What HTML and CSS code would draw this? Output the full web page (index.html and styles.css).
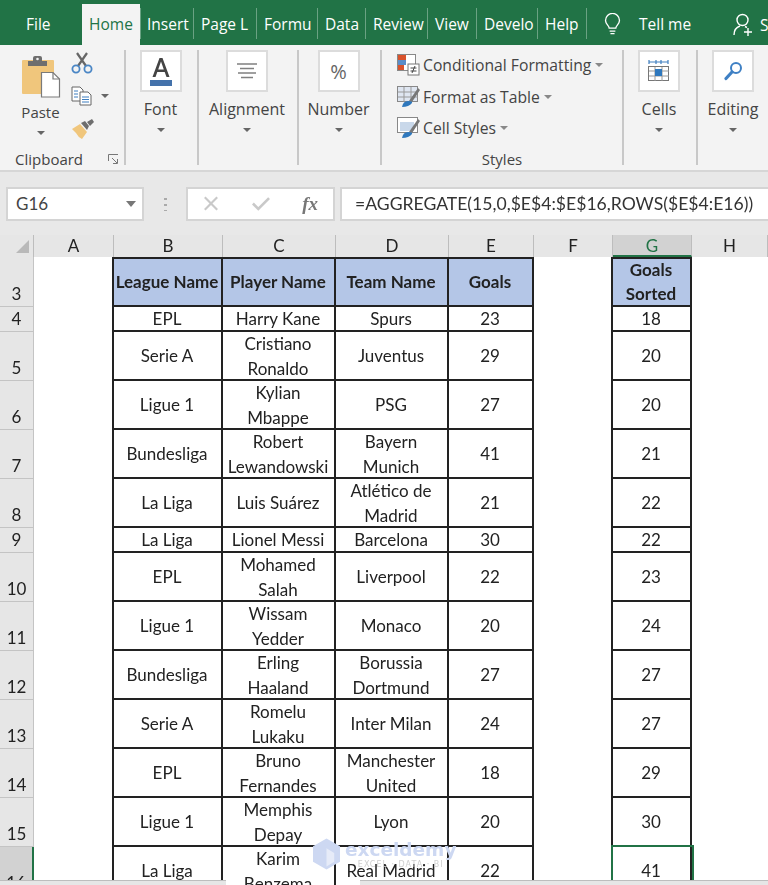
FILE: index.html
```html
<!DOCTYPE html>
<html lang="en">
<head>
    <meta charset="UTF-8">
    <title>AGGREGATE - Excel</title>
    <link rel="stylesheet" href="styles.css">
</head>
<body>
    <!-- ribbon tabs -->
    <nav class="tabs">
        <span class="tab tab-file">File</span>
        <span class="tab tab-active">Home</span>
        <span class="tab">Insert</span>
        <span class="tab">Page L</span>
        <span class="tab">Formu</span>
        <span class="tab">Data</span>
        <span class="tab">Review</span>
        <span class="tab">View</span>
        <span class="tab">Develo</span>
        <span class="tab">Help</span>
        <div class="tell-me">
            <svg width="17" height="23" viewBox="0 0 20 28" fill="none" stroke="#fff" stroke-width="1.600">
                <path d="M6 18.500c0-3-4.500-5-4.500-9.500a8.500 8.500 0 0 1 17 0c0 4.500-4.500 6.500-4.500 9.500z"/>
                <path d="M6.500 22h7M7.500 25h5"/>
            </svg>
            <span>Tell me</span>
        </div>
        <div class="share">
            <svg width="21" height="24" viewBox="0 0 21 24" fill="none" stroke="#fff" stroke-width="1.400">
                <circle cx="9.500" cy="7" r="5.500"/>
                <path d="M1 22c0-5 3-8 6-9M12 13.500l2 1M15 15v8M11 19h8"/>
            </svg>
            <span>S</span>
        </div>
    </nav>

    <!-- ribbon -->
    <section class="ribbon">
        <div class="group group-clipboard">
            <div class="clipboard-tools">
                <div class="paste">
                    <svg width="40" height="43" viewBox="0 0 40 43">
                        <rect x="1" y="5" width="32" height="34" rx="1" fill="#f0c67c"/>
                        <path d="M7 11V6h5V3q0-2 2-2h5q2 0 2 2v3h5v5z" fill="#6e6e6e"/>
                        <circle cx="16.500" cy="4" r="1.300" fill="#f3f3f3"/>
                        <path d="M20.500 17.500H32l6.500 6.500v18h-18z" fill="#fff" stroke="#7a7a7a" stroke-width="1.200"/>
                        <path d="M32 17.500V24h6.500" fill="none" stroke="#7a7a7a" stroke-width="1.200"/>
                    </svg>
                    <span class="tool-label">Paste</span>
                    <i class="caret"></i>
                </div>
                <div class="small-tools">
                    <svg width="22" height="22" viewBox="0 0 22 22" fill="none">
                        <path d="M6 1l9 13M16 1L7 14" stroke="#666" stroke-width="2.200"/>
                        <circle cx="5" cy="17" r="3.600" stroke="#4a86c5" stroke-width="1.800"/>
                        <circle cx="17" cy="17" r="3.600" stroke="#4a86c5" stroke-width="1.800"/>
                    </svg>
                    <div class="copy-row">
                        <svg width="22" height="20" viewBox="0 0 22 20" fill="#fff" stroke="#666" stroke-width="1">
                            <path d="M1 1h8l3 3v11H1z"/>
                            <path d="M9 6h8l3 3v10H9z"/>
                            <path d="M3 5h4M3 8h4M3 11h4M11 11h7M11 13.500h7M11 16h7" stroke="#3f7fc0"/>
                        </svg>
                        <i class="caret"></i>
                    </div>
                    <svg width="24" height="22" viewBox="0 0 24 22">
                        <path d="M1 11l8-5 7 8-5 7q-4-2-6-6z" fill="#f0c67c"/>
                        <path d="M10 5l4-2 4 5-2 4zM16 4l5-3 2 3-4 4z" fill="#6e6e6e"/>
                    </svg>
                </div>
            </div>
            <div class="group-label">
                <span>Clipboard</span>
                <svg class="launcher" width="11" height="10" viewBox="0 0 11 10" fill="none" stroke="#777">
                    <path d="M.5 7V.5H10M4 4l5 5M5 9.500h4.500V5"/>
                </svg>
            </div>
        </div>

        <div class="group group-collapsed">
            <div class="big-box">
                <svg width="24" height="31" viewBox="0 0 24 31">
                    <path d="M3.500 21L10.500 2h3l7 19h-3l-1.800-5H8.300l-1.800 5zM9.200 13.500h5.600L12 5.500z" fill="#444"/>
                    <rect x="1" y="24" width="22" height="6" fill="#4472ab"/>
                </svg>
            </div>
            <span class="tool-label">Font</span>
            <i class="caret"></i>
        </div>

        <div class="group group-collapsed">
            <div class="big-box">
                <svg width="20" height="16" viewBox="0 0 20 16" fill="none" stroke="#808080" stroke-width="1.500">
                    <path d="M0 1h20M3 5.500h14M1 10h18M4 14.500h12"/>
                </svg>
            </div>
            <span class="tool-label">Alignment</span>
            <i class="caret"></i>
        </div>

        <div class="group group-collapsed">
            <div class="big-box percent">%</div>
            <span class="tool-label">Number</span>
            <i class="caret"></i>
        </div>

        <div class="group group-styles">
            <div class="style-list">
                <div class="style-row">
                    <svg width="23" height="22" viewBox="0 0 23 22">
                        <rect x=".5" y=".5" width="18" height="16" fill="#fff" stroke="#888"/>
                        <path d="M1 1h8v5H1zM1 11h6v5H1z" fill="#d9532c"/>
                        <path d="M1 6h8v5H1z" fill="#5b8dc9"/>
                        <rect x="11" y="10" width="11" height="11" fill="#fff" stroke="#777"/>
                        <path d="M13.500 14h6M13.500 17h6M15 19l3-7" stroke="#444" fill="none"/>
                    </svg>
                    <span>Conditional Formatting</span><i class="caret caret-small"></i>
                </div>
                <div class="style-row">
                    <svg width="23" height="22" viewBox="0 0 23 22">
                        <rect x=".5" y=".5" width="20" height="15" fill="#dfe6f1" stroke="#888"/>
                        <path d="M7 1v15M14 1v15M1 6h20M1 11h20" stroke="#999"/>
                        <path d="M12 15l9-13 2 2-8 12z" fill="#777"/>
                        <path d="M5 21q1-6 6-6t4 2q-3 4-10 4z" fill="#2f78bd"/>
                    </svg>
                    <span>Format as Table</span><i class="caret caret-small"></i>
                </div>
                <div class="style-row">
                    <svg width="23" height="22" viewBox="0 0 23 22">
                        <rect x=".5" y=".5" width="20" height="15" fill="#fff" stroke="#888"/>
                        <rect x="3" y="5" width="14" height="9" fill="#c9d8ea"/>
                        <path d="M12 15l9-13 2 2-8 12z" fill="#777"/>
                        <path d="M5 21q1-6 6-6t4 2q-3 4-10 4z" fill="#2f78bd"/>
                    </svg>
                    <span>Cell Styles</span><i class="caret caret-small"></i>
                </div>
            </div>
            <div class="group-label group-label-center">Styles</div>
        </div>

        <div class="group group-collapsed">
            <div class="big-box">
                <svg width="22" height="23" viewBox="0 0 22 23" fill="none">
                    <path d="M1 2h19M1 0v4M20 0v4M8 0v4M13 0v4" stroke="#3f7fc0" stroke-width="1.200"/>
                    <rect x=".5" y="6.500" width="20" height="14" fill="#fff" stroke="#777"/>
                    <path d="M7 7v14M14 7v14M1 11h20M1 16h20" stroke="#999"/>
                    <rect x="7" y="9" width="7" height="7" fill="#2f78bd"/>
                </svg>
            </div>
            <span class="tool-label">Cells</span>
            <i class="caret"></i>
        </div>

        <div class="group group-collapsed group-last">
            <div class="big-box">
                <svg width="19" height="20" viewBox="0 0 19 20" fill="none" stroke="#3f80c4">
                    <circle cx="12" cy="7" r="5" stroke-width="2"/>
                    <path d="M8 11l-6 6.500" stroke-width="3.200" stroke-linecap="round"/>
                </svg>
            </div>
            <span class="tool-label">Editing</span>
            <i class="caret"></i>
        </div>
    </section>

    <!-- name box and formula bar -->
    <section class="formula-row">
        <div class="name-box">G16<i class="caret caret-name"></i></div>
        <div class="grip"></div>
        <div class="fx-box">
            <svg width="16" height="15" viewBox="0 0 18 16" fill="none" stroke="#c9c9c9" stroke-width="2.400">
                <path d="M2 1l14 14M16 1L2 15"/>
            </svg>
            <svg width="18" height="15" viewBox="0 0 20 16" fill="none" stroke="#c9c9c9" stroke-width="3">
                <path d="M1 8l6 6L19 2"/>
            </svg>
            <span class="fx">fx</span>
        </div>
        <div class="formula">=AGGREGATE(15,0,$E$4:$E$16,ROWS($E$4:E16))</div>
    </section>

    <!-- sheet -->
    <main class="sheet">
        <div class="row col-heads">
            <div class="corner"><i></i></div>
            <div>A</div><div>B</div><div>C</div><div>D</div><div>E</div><div>F</div><div class="col-active">G</div><div>H</div>
        </div>

        <div class="row row-head">
            <div class="rh">3</div><div class="gap"></div>
            <div class="cell th">League Name</div><div class="cell th">Player Name</div><div class="cell th">Team Name</div><div class="cell th">Goals</div>
            <div class="gap"></div><div class="cell th">Goals<br>Sorted</div>
        </div>
        <div class="row row-short">
            <div class="rh">4</div><div class="gap"></div>
            <div class="cell">EPL</div><div class="cell">Harry Kane</div><div class="cell">Spurs</div><div class="cell">23</div>
            <div class="gap"></div><div class="cell">18</div>
        </div>
        <div class="row">
            <div class="rh">5</div><div class="gap"></div>
            <div class="cell">Serie A</div><div class="cell">Cristiano<br>Ronaldo</div><div class="cell">Juventus</div><div class="cell">29</div>
            <div class="gap"></div><div class="cell">20</div>
        </div>
        <div class="row">
            <div class="rh">6</div><div class="gap"></div>
            <div class="cell">Ligue 1</div><div class="cell">Kylian<br>Mbappe</div><div class="cell">PSG</div><div class="cell">27</div>
            <div class="gap"></div><div class="cell">20</div>
        </div>
        <div class="row">
            <div class="rh">7</div><div class="gap"></div>
            <div class="cell">Bundesliga</div><div class="cell">Robert<br>Lewandowski</div><div class="cell">Bayern<br>Munich</div><div class="cell">41</div>
            <div class="gap"></div><div class="cell">21</div>
        </div>
        <div class="row">
            <div class="rh">8</div><div class="gap"></div>
            <div class="cell">La Liga</div><div class="cell">Luis Suárez</div><div class="cell">Atlético de<br>Madrid</div><div class="cell">21</div>
            <div class="gap"></div><div class="cell">22</div>
        </div>
        <div class="row row-short">
            <div class="rh">9</div><div class="gap"></div>
            <div class="cell">La Liga</div><div class="cell">Lionel Messi</div><div class="cell">Barcelona</div><div class="cell">30</div>
            <div class="gap"></div><div class="cell">22</div>
        </div>
        <div class="row">
            <div class="rh">10</div><div class="gap"></div>
            <div class="cell">EPL</div><div class="cell">Mohamed<br>Salah</div><div class="cell">Liverpool</div><div class="cell">22</div>
            <div class="gap"></div><div class="cell">23</div>
        </div>
        <div class="row">
            <div class="rh">11</div><div class="gap"></div>
            <div class="cell">Ligue 1</div><div class="cell">Wissam<br>Yedder</div><div class="cell">Monaco</div><div class="cell">20</div>
            <div class="gap"></div><div class="cell">24</div>
        </div>
        <div class="row">
            <div class="rh">12</div><div class="gap"></div>
            <div class="cell">Bundesliga</div><div class="cell">Erling<br>Haaland</div><div class="cell">Borussia<br>Dortmund</div><div class="cell">27</div>
            <div class="gap"></div><div class="cell">27</div>
        </div>
        <div class="row">
            <div class="rh">13</div><div class="gap"></div>
            <div class="cell">Serie A</div><div class="cell">Romelu<br>Lukaku</div><div class="cell">Inter Milan</div><div class="cell">24</div>
            <div class="gap"></div><div class="cell">27</div>
        </div>
        <div class="row">
            <div class="rh">14</div><div class="gap"></div>
            <div class="cell">EPL</div><div class="cell">Bruno<br>Fernandes</div><div class="cell">Manchester<br>United</div><div class="cell">18</div>
            <div class="gap"></div><div class="cell">29</div>
        </div>
        <div class="row">
            <div class="rh">15</div><div class="gap"></div>
            <div class="cell">Ligue 1</div><div class="cell">Memphis<br>Depay</div><div class="cell">Lyon</div><div class="cell">20</div>
            <div class="gap"></div><div class="cell">30</div>
        </div>
        <div class="row">
            <div class="rh rh-active">16</div><div class="gap"></div>
            <div class="cell">La Liga</div><div class="cell">Karim<br>Benzema</div><div class="cell">Real Madrid</div><div class="cell">22</div>
            <div class="gap"></div><div class="cell cell-selected">41</div>
        </div>
    </main>

    <!-- watermark and sheet tab strip lie over the sheet -->
    <div class="watermark">
        <svg width="27" height="32" viewBox="0 0 28 32">
            <path d="M14 0l14 8v16l-14 8L0 24V8z" fill="#cdd8f2"/>
            <path d="M14 10l8 5v9l-8 5z" fill="#e6ebf8"/>
        </svg>
        <div>
            <div class="wm-name">exceldemy</div>
            <div class="wm-tag">EXCEL · DATA · BI</div>
        </div>
    </div>
    <div class="strip strip-left"></div>
    <div class="strip strip-right"></div>
</body>
</html>
```

FILE: styles.css
```css
html, body {
    margin: 0;
    height: 885px;
    overflow: hidden;
}
body {
    position: relative;
    width: 768px;
    background-color: #fff;
    color: #333;
    font-family: "Open Sans", "Noto Sans", sans-serif;
    font-size: 16px;
    filter: blur(.35px);
}

/* tabs */
.tabs {
    display: grid;
    grid-template-columns: 82px 58px 54px 63px 61px 48px 62px 49px 61px 49px 137px 1fr;
    grid-template-rows: 45px;
    height: 45px;
    background-color: #217346;
    color: #fff;
    font-size: 15.500px;
    overflow: hidden;
}
.tab {
    position: relative;
    padding: 0 7px;
    line-height: 48px;
    white-space: nowrap;
    text-align: left;
}
.tab::after {
    content: "";
    position: absolute;
    top: 8px;
    right: 0;
    height: 31px;
    width: 1px;
    background-color: #6aa283;
}
.tab-active + .tab::before {
    content: "";
    position: absolute;
    top: 8px;
    left: 0;
    height: 31px;
    width: 1px;
    background-color: #6aa283;
}
.tab-file::after, .tab-active::after {
    display: none;
}
.tab-file {
    padding-left: 26px;
}
.tab-active {
    margin-top: 4px;
    padding: 0;
    line-height: 41px;
    text-align: center;
    background-color: #f3f3f3;
    color: #217346;
}
.tell-me {
    display: flex;
    align-items: center;
    gap: 18px;
    padding-left: 17px;
    padding-top: 3px;
}
.share {
    display: flex;
    align-items: center;
    gap: 6px;
    padding-top: 4px;
    padding-left: 9px;
}

/* ribbon */
.ribbon {
    display: grid;
    grid-template-columns: 126px 73px 100px 83px 242px 74px 1fr;
    height: 127px;
    box-sizing: border-box;
    padding-top: 5px;
    background-color: #f3f3f3;
    border-bottom: 2px solid #d6d6d6;
}
.group {
    display: flex;
    flex-direction: column;
    height: 115px;
    border-right: 2px solid #c8c8c8;
    box-sizing: border-box;
}
.group-collapsed {
    align-items: center;
    padding-right: 2px;
}
.group-last {
    border-right: none;
    padding-right: 0;
}
.big-box {
    display: flex;
    align-items: center;
    justify-content: center;
    width: 38px;
    height: 38px;
    background-color: #fff;
    border: 2px solid #dcdcdc;
}
.percent {
    font-size: 20px;
    font-weight: 500;
    color: #666;
}
.tool-label {
    margin-top: 5px;
    line-height: 24px;
    color: #444;
}
.caret {
    display: block;
    width: 0;
    height: 0;
    margin-top: 7px;
    border-left: 4px solid transparent;
    border-right: 4px solid transparent;
    border-top: 4px solid #666;
}
.caret-small {
    display: inline-block;
    margin: 0 0 2px 4px;
    vertical-align: middle;
    border-top-color: #888;
}
.group-label {
    display: flex;
    align-items: center;
    justify-content: space-between;
    margin-top: auto;
    margin-bottom: -3px;
    padding: 0 5px 0 15px;
    height: 18px;
    font-size: 15px;
    color: #444;
}
.group-label-center {
    justify-content: center;
    padding: 0;
}

/* clipboard */
.clipboard-tools {
    display: flex;
    gap: 11px;
    padding-left: 21px;
}
.paste {
    display: flex;
    flex-direction: column;
    align-items: center;
    width: 39px;
    padding-top: 5px;
}
.paste .tool-label {
    margin-top: 2px;
    font-size: 15px;
}
.small-tools {
    display: flex;
    flex-direction: column;
    padding-top: 2px;
    gap: 12px;
}
.copy-row {
    display: flex;
    align-items: center;
    gap: 8px;
}
.copy-row .caret {
    margin-top: 0;
}

/* styles */
.style-list {
    display: flex;
    flex-direction: column;
    gap: 9.500px;
    padding: 4px 0 0 15px;
}
.style-row {
    display: flex;
    align-items: center;
    gap: 3px;
    height: 22px;
    font-size: 15.700px;
    color: #444;
    white-space: nowrap;
}
.style-row .caret-small {
    margin: 0 0 0 1px;
}

/* formula bar */
.formula-row {
    display: flex;
    align-items: center;
    height: 63px;
    padding-left: 6px;
    background-color: #e8e8e8;
    box-sizing: border-box;
}
.name-box, .fx-box, .formula {
    display: flex;
    align-items: center;
    height: 34px;
    box-sizing: border-box;
    background-color: #fff;
    border: 2px solid #d4d4d4;
}
.name-box {
    position: relative;
    width: 138px;
    padding-left: 8px;
    font-family: "Lato", sans-serif;
    font-size: 17px;
    color: #444;
}
.caret-name {
    position: absolute;
    right: 6px;
    top: 12px;
    margin: 0;
    border-left-width: 5px;
    border-right-width: 5px;
    border-top-width: 6px;
    border-top-color: #777;
}
.grip {
    width: 3px;
    height: 15px;
    margin: 0 19px 0 20px;
    background-image: radial-gradient(circle, #aaa 1.400px, transparent 1.500px);
    background-size: 3px 6px;
}
.fx-box {
    width: 149px;
    justify-content: space-between;
    padding: 0 15px;
}
.fx {
    font-family: "Liberation Serif", serif;
    font-style: italic;
    font-weight: bold;
    font-size: 19px;
    color: #777;
}
.formula {
    flex: 1;
    margin-left: 5px;
    padding-left: 13px;
    border-right: none;
    font-family: "Lato", sans-serif;
    font-size: 17.600px;
    color: #333;
    white-space: nowrap;
}

/* sheet */
.sheet {
    font-family: "Lato", sans-serif;
    font-size: 17px;
    color: #222;
}
.row {
    display: grid;
    grid-template-columns: 34px 80px 109px 113px 113px 85px 79px 79px 76px;
    grid-template-rows: minmax(0, 1fr);
    height: 49px;
}
.col-heads {
    height: 22px;
    line-height: 22px;
    background-color: #e6e6e6;
    text-align: center;
}
.col-heads > div {
    box-sizing: border-box;
    border-right: 1px solid #bdbdbd;
}
.corner {
    position: relative;
}
.corner i {
    position: absolute;
    right: 4px;
    bottom: 4px;
    width: 0;
    height: 0;
    border-left: 13px solid transparent;
    border-bottom: 13px solid #b9b9b9;
}
.col-active {
    background-color: #d2d2d2;
    color: #217346;
    border-bottom: 2px solid #217346;
}
.row-head {
    height: 50px;
}
.row-short {
    height: 25px;
}
.rh {
    display: flex;
    align-items: flex-end;
    justify-content: center;
    line-height: 24px;
    box-sizing: border-box;
    background-color: #e6e6e6;
    border-bottom: 1px solid #c4c4c4;
    border-right: 1px solid #c4c4c4;
}
.rh-active {
    background-color: #d2d2d2;
    border-right: 2px solid #217346;
}
.gap {
    border-right: 2px solid #222;
}
.cell {
    display: block;
    box-sizing: border-box;
    align-content: unsafe center;
    padding: 2px 1px 0 0;
    line-height: 24.500px;
    text-align: center;
    border-right: 2px solid #222;
    border-bottom: 2px solid #222;
}
.th {
    padding-top: 0;
    background-color: #b4c6e7;
    border-top: 2px solid #222;
    font-weight: bold;
}
.cell-selected {
    position: relative;
    z-index: 1;
    outline: 2px solid #217346;
}

/* overlays */
.watermark {
    position: absolute;
    z-index: 2;
    left: 313px;
    top: 838px;
    display: flex;
    gap: 5px;
    font-family: "DejaVu Sans", sans-serif;
    color: #cdd8f2;
}
.wm-name {
    padding-top: 2px;
    font-size: 18.500px;
    font-weight: bold;
    line-height: 20px;
}
.wm-tag {
    font-size: 8px;
    line-height: 9px;
    color: #cfcfcf;
    text-align: center;
    letter-spacing: 1px;
}
.strip {
    position: absolute;
    z-index: 3;
    bottom: 0;
    height: 4px;
    background-color: #e6e6e6;
    border-top: 1px solid #bdbdbd;
}
.strip-left {
    left: 0;
    width: 226px;
}
.strip-right {
    left: 360px;
    right: 0;
}
```
